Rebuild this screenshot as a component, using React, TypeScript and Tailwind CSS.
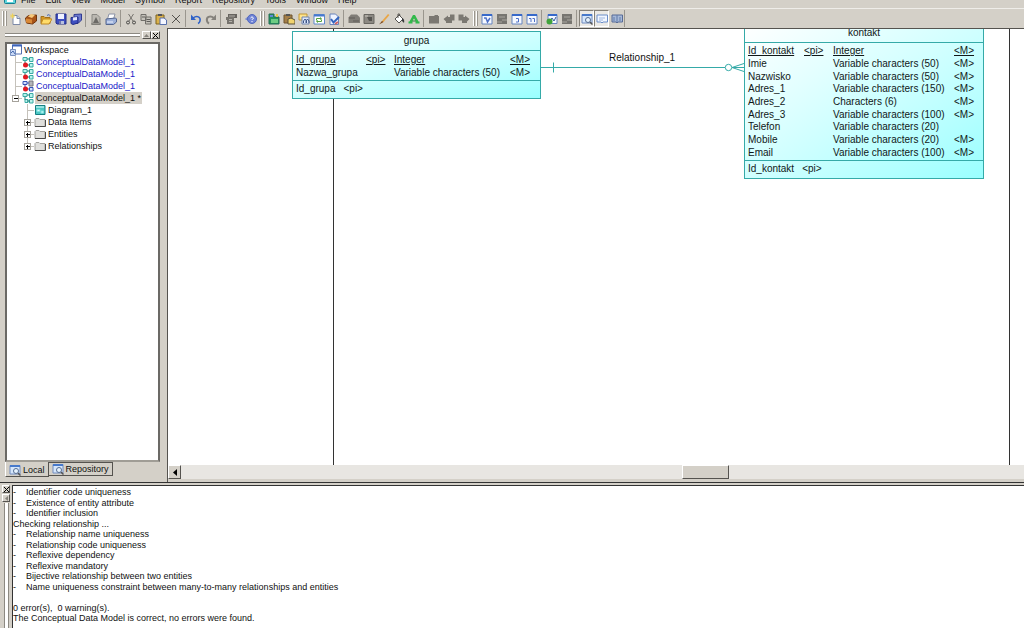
import React, { useState } from "react";

type IconName = keyof typeof icons;

interface Attribute {
  name: string;
  pi?: boolean;
  type: string;
  mandatory?: boolean;
}

interface TreeItem {
  label: string;
  level: number;
  icon: IconName;
  expander?: "plus" | "minus";
  closed?: boolean;
  last?: boolean;
}

const icons = {
  app: (
    <>
      <rect x="3" y="0" width="9" height="5" fill="#c9f4f4" stroke="#1c9aa8" />
      <rect x="0.500" y="4.500" width="11" height="5" rx="1" fill="#5fd5dc" stroke="#137f92" />
      <path d="M3 7h6" stroke="#fff" strokeWidth="2" />
    </>
  ),
  new: (
    <>
      <path d="M3 2.500h4l3 3v6H3z" fill="#fff" stroke="#7d8aa8" />
      <path d="M7 2.500v3h3" fill="#cdd7ee" stroke="#7d8aa8" />
      <path d="M0 3h5M2.500 0.500v5M1 1.500l3 3M4 1.500l-3 3" stroke="#f0d458" />
    </>
  ),
  openModel: (
    <>
      <path d="M0.500 5l3-2.500 8-.5v6l-4 3-6-1z" fill="#a85418" stroke="#70350c" />
      <path d="M1 5.500l6 1v4l-6-1z" fill="#d98937" />
      <path d="M3 3.500l3-2.500 4 1-3 3z" fill="#f7c879" />
    </>
  ),
  open: (
    <>
      <path d="M1 3.500h3l1 1h5v6H1z" fill="#d79a25" stroke="#a2701b" />
      <path d="M3 6h9l-3 5H1z" fill="#ffdc69" stroke="#c08a25" />
      <path d="M7 2.500q3-2 3 1" fill="none" stroke="#3d62b4" />
    </>
  ),
  save: (
    <>
      <path d="M1 1h10v10H2l-1-1z" fill="#3e4fc0" stroke="#252f87" />
      <path d="M3 1h6v5H3z" fill="#eef1ff" />
      <path d="M4 8h5v3H4z" fill="#b9c1de" />
      <path d="M5 8v3" stroke="#252f87" />
    </>
  ),
  saveAll: (
    <>
      <path d="M4 1.500l7.500-.5v6L8 10.500H4z" fill="#6c79cf" stroke="#313b91" />
      <path d="M1 4.500L8 4v6l-5 1.500-2-1z" fill="#3e4fc0" stroke="#252f87" />
      <path d="M3 4.500l4-.5v3l-4 .5z" fill="#e5e9ff" />
    </>
  ),
  preview: (
    <>
      <path d="M2 1.500h5l3 3v7H2z" fill="#bbb8b1" stroke="#8a8883" />
      <path d="M3 10L6 4l3 6z" fill="#6b6965" />
      <path d="M1 11h10" stroke="#77746f" />
    </>
  ),
  print: (
    <>
      <path d="M4 1h6L8.500 6H2.500z" fill="#fff" stroke="#8c93a6" />
      <path d="M1 6l9.500-1 1 1v3l-3 2.500H1z" fill="#9cb0d9" stroke="#53658f" />
      <path d="M2 9h6" stroke="#eef3ff" />
    </>
  ),
  cut: (
    <>
      <path d="M3.500 1L8 8M8.500 1L4 8" stroke="#77746f" />
      <circle cx="3" cy="9.500" r="1.500" fill="none" stroke="#4a4947" />
      <circle cx="9" cy="9.500" r="1.500" fill="none" stroke="#4a4947" />
    </>
  ),
  copy: (
    <>
      <path d="M1 1.500h5v6H1zM5.500 4h5.500v7H5.500z" fill="#c5c2ba" stroke="#706e69" />
      <path d="M2 4h3M6.500 6.500h4M6.500 8.500h4" stroke="#605e5a" />
    </>
  ),
  paste: (
    <>
      <path d="M1 2h8v9H1z" fill="#dbb14a" stroke="#7e641f" />
      <path d="M3 1h4v2H3z" fill="#54545a" />
      <path d="M5 5h4l2.500 2v4.500H5z" fill="#f4f6ff" stroke="#5870ac" />
    </>
  ),
  remove: <path d="M2 2l8 8M10 2l-8 8" stroke="#55534f" />,
  undo: (
    <>
      <path d="M3 5c4-3 8-1 7 3-.3 1.500-1 2-2 2.500" fill="none" stroke="#2f62c8" strokeWidth="1.500" />
      <path d="M1 1.500V7h5z" fill="#2f62c8" />
    </>
  ),
  redo: (
    <>
      <path d="M9 5C5 2 1 4 2 8c.3 1.500 1 2 2 2.500" fill="none" stroke="#85827c" strokeWidth="2" />
      <path d="M11 1.500V7H6z" fill="#85827c" />
    </>
  ),
  props: (
    <>
      <path d="M3 1h9v4H3z" fill="#66635e" />
      <path d="M1 4h8v7H2V7H1z" fill="#77746e" />
      <path d="M4 3h6M4 6.500h3M4 8.500h3" stroke="#b5b2ab" />
    </>
  ),
  help: (
    <>
      <path d="M0.500 6l4-3 6 .5-2 6z" fill="#a9b5ea" stroke="#7786cc" />
      <circle cx="7" cy="6" r="4.500" fill="#6f83d6" stroke="#5268bc" />
      <path d="M5.500 5q1.500-2.500 3 0c0 1-1.500.7-1.500 2M7 8v1.200" fill="none" stroke="#fff" />
    </>
  ),
  model: (
    <>
      <path d="M1 1h5v3h5v7H1z" fill="#24935b" stroke="#256c56" />
      <path d="M3 6h7v4H3z" fill="#6dcc83" />
      <path d="M2 2h3v2H2z" fill="#5e89d9" />
      <path d="M9 1v3" stroke="#e7c847" strokeWidth="2" />
    </>
  ),
  pastePkg: (
    <>
      <path d="M1 2h8v8H1z" fill="#a47e48" stroke="#6f552e" />
      <path d="M3 1h4v2H3z" fill="#555" />
      <path d="M5 6l3-1 4 2v4H5z" fill="#f1d36e" stroke="#5b503a" />
    </>
  ),
  find: (
    <>
      <path d="M1 1h8v6H1z" fill="#ffe48b" stroke="#c19734" />
      <path d="M4 4h7v7H4z" fill="#dbe6fb" stroke="#7386ad" />
      <path d="M5.500 10V8L7 6l1.500 2v2M8 10V8l1.500-2L11 8v2" fill="none" stroke="#3f5687" />
    </>
  ),
  refresh: (
    <>
      <path d="M1 1.500h10.500v9.500H1z" fill="#fff" stroke="#5f87c9" />
      <path d="M1 2.500h10" stroke="#4579d0" strokeWidth="2" />
      <path d="M3.500 7.500V5.500h4M8.500 6.500v2h-4" fill="none" stroke="#56a33f" />
      <path d="M7 4l2 1.500L7 7zM5 7l-2 1.500L5 10z" fill="#56a33f" />
    </>
  ),
  check: (
    <>
      <path d="M2 1h5.500l3 3v7.500H2z" fill="#eef3ff" stroke="#6883bb" />
      <path d="M3 6l2.500 3.500L11 4" fill="none" stroke="#3464bd" strokeWidth="2" />
      <path d="M7 11l3-2" stroke="#d36262" strokeWidth="2" />
    </>
  ),
  grayGroup: (
    <>
      <path d="M3 1.500h6l3 3V10H0.500V4.500z" fill="#807d77" />
      <path d="M1 5h6M5 8h6" stroke="#5f5d59" />
    </>
  ),
  grayImage: (
    <>
      <path d="M1 1.500h10v9H1z" fill="#8c8983" stroke="#686661" />
      <path d="M4 4h5v4H6z" fill="#55534f" />
      <path d="M2 3h3" stroke="#cbc7bf" />
    </>
  ),
  pen: (
    <>
      <path d="M2 11L4 8l6-7 1.500 1-6 7z" fill="#e9a646" />
      <path d="M1 11.500l3-3.500 1.500 1z" fill="#74482a" />
    </>
  ),
  fill: (
    <>
      <path d="M2 6l4-4 4 4-4 4z" fill="#fff" stroke="#55534f" />
      <path d="M5 5V1q2-1 2 2" fill="none" stroke="#55534f" />
      <path d="M9 5q3 1 2 5l-2-2z" fill="#383b3c" />
    </>
  ),
  font: (
    <>
      <path d="M0.500 10.500v-2h1L5 2h2l3.500 6.500h1v2h-4v-2H8L6 5.500 4 8.500h.5v2z" fill="#31b94a" />
      <path d="M4 8h4" stroke="#248b37" />
    </>
  ),
  grayFolder: <path d="M1 3h5l1-1h3v1h1v7.500H1z" fill="#7b7872" />,
  back: <path d="M11.500 1.500v6H9V10H3V8.500L0.500 6 5 2.500V4h2V1.500z" fill="#7b7872" />,
  forward: <path d="M0.500 1.500h5V4H7V2.500L11.500 6 9 8.500V10H4V7.500H0.500z" fill="#7b7872" />,
  diagramA: (
    <>
      <path d="M1 1.500h10v9.500H1z" fill="#f5f8ff" stroke="#6785bf" />
      <path d="M1 2h10" stroke="#3769ca" strokeWidth="2" />
      <path d="M3 5h2l1.500 4L9 5" fill="none" stroke="#4e71c7" strokeWidth="1.500" />
    </>
  ),
  grayDiagram: (
    <>
      <path d="M1 1h10v10H1z" fill="#777570" />
      <path d="M3 4h6M6 7h5M1 9h5" stroke="#aaa79f" />
    </>
  ),
  diagramB: (
    <>
      <path d="M1 1.500h10v9.500H1z" fill="#f5f8ff" stroke="#6785bf" />
      <path d="M1 2h10" stroke="#3769ca" strokeWidth="2" />
      <path d="M5 5.500h2.500V9H5" fill="none" stroke="#4e71c7" />
    </>
  ),
  diagramC: (
    <>
      <path d="M1 1.500h10v9.500H1z" fill="#f5f8ff" stroke="#6785bf" />
      <path d="M1 2h10" stroke="#3769ca" strokeWidth="2" />
      <path d="M3 5.500h2V9M6.500 5.500h2V9" fill="none" stroke="#4e71c7" />
    </>
  ),
  impact: (
    <>
      <path d="M2 1.500h9v9H2z" fill="#f5f8ff" stroke="#6785bf" />
      <path d="M2 2h9" stroke="#3769ca" strokeWidth="2" />
      <path d="M4 8l2-3 2 3 2-4" fill="none" stroke="#355b9a" />
      <circle cx="3.500" cy="8.500" r="3" fill="#41a43c" />
    </>
  ),
  browse: (
    <>
      <path d="M1 1.500h10v8.500H1z" fill="#d5e6fb" stroke="#718cc0" />
      <path d="M1 2h10" stroke="#4779cb" strokeWidth="2" />
      <circle cx="7" cy="7" r="2.500" fill="#e7f4ff" stroke="#566c91" />
      <path d="M9 9l2.500 2.500" stroke="#555" strokeWidth="1.500" />
    </>
  ),
  output: (
    <>
      <path d="M1 2h10.500v7H7l-1 1-1-1H1z" fill="#f3f7ff" stroke="#6b8ec9" />
      <path d="M3 5h6M3 7h4" stroke="#9db6e0" />
    </>
  ),
  results: (
    <>
      <path d="M1 2h10.500v7H7l-1 1-1-1H1z" fill="#a6b8d8" stroke="#576b96" />
      <path d="M6 2v7M3 4v4M9 4v4" stroke="#607aa8" />
    </>
  ),
  workspace: (
    <>
      <path d="M2.500 1h9v9h-9z" fill="#fff" stroke="#536faf" />
      <path d="M2 1.500h10" stroke="#3d65bc" strokeWidth="2" />
      <path d="M0.500 5.500h5v6h-5z" fill="#c8d8f5" stroke="#7890bf" />
      <path d="M1 9l2-2 2 3" fill="none" stroke="#456baf" />
    </>
  ),
  cdm: (
    <>
      <path d="M1 1.500h4v3H1zM7.500 1.500h3.500v4H7.500zM7.500 7.500h3.500v3.500H7.500zM3 7.500h3v3H3z" fill="#b8f2ec" stroke="#3aaba4" />
      <path d="M5 3h3M3 5v3M5 9h3" stroke="#1d7f7a" />
    </>
  ),
  cdmClosed: (
    <>
      <path d="M1 1.500h4v3H1zM7.500 1.500h3.500v4H7.500zM7.500 7.500h3.500v3.500H7.500z" fill="#b8f2ec" stroke="#3aaba4" />
      <path d="M5 3h3M3 5v3M5 9h3" stroke="#1d7f7a" />
      <circle cx="3.500" cy="9" r="2.500" fill="#e01923" />
    </>
  ),
  pdmClosed: (
    <>
      <path d="M1 1.500h4v3H1zM7.500 7.500h3.500v3.500H7.500z" fill="#d3e0ff" stroke="#3654b5" />
      <path d="M7 1h4v5H7z" fill="#b5b5ba" stroke="#77777e" />
      <path d="M5 3h2M3 5v3M5 9h3" stroke="#3654b5" />
      <circle cx="3.500" cy="9" r="2.500" fill="#e01923" />
    </>
  ),
  diagram: (
    <>
      <path d="M1.500 1.500h9.500v9H1.500z" fill="#4cc7c4" stroke="#167f83" />
      <path d="M2 3h8" stroke="#e1ffff" />
      <path d="M3 5.500h3v2H3zM7 7h2.500v2H7z" fill="#d8ffff" stroke="#7fe0de" />
    </>
  ),
  folder: (
    <>
      <path d="M1 3.500l1-1h3l1 1h5v7H1z" fill="#dfdfdc" stroke="#a5a4a0" />
      <path d="M1 10.500h10.500V4" fill="none" stroke="#4b4b4a" />
    </>
  ),
};

const Icon = ({ name }: { name: IconName }) => (
  <svg viewBox="0 0 12 12" className="h-3 w-3 shrink-0" aria-hidden="true">
    {icons[name]}
  </svg>
);

const menus = ["File", "Edit", "View", "Model", "Symbol", "Report", "Repository", "Tools", "Window", "Help"];

// toolbars are separated by a gripper, groups inside a toolbar by a line
const toolbars: IconName[][][] = [
  [
    ["new", "openModel", "open", "save", "saveAll"],
    ["preview", "print"],
    ["cut", "copy", "paste", "remove"],
    ["undo", "redo"],
    ["props"],
    ["help"],
  ],
  [
    ["model", "pastePkg", "find", "refresh", "check"],
    ["grayGroup", "grayImage", "pen", "fill", "font"],
    ["grayFolder", "back", "forward"],
  ],
  [
    ["diagramA", "grayDiagram", "diagramB", "diagramC"],
    ["impact", "grayDiagram"],
    ["browse", "output", "results"],
  ],
];

const tree: TreeItem[] = [
  { label: "Workspace", level: 0, icon: "workspace" },
  { label: "ConceptualDataModel_1", level: 1, icon: "cdmClosed", closed: true },
  { label: "ConceptualDataModel_1", level: 1, icon: "cdmClosed", closed: true },
  { label: "ConceptualDataModel_1", level: 1, icon: "pdmClosed", closed: true },
  { label: "ConceptualDataModel_1 *", level: 1, icon: "cdm", expander: "minus", last: true },
  { label: "Diagram_1", level: 2, icon: "diagram" },
  { label: "Data Items", level: 2, icon: "folder", expander: "plus" },
  { label: "Entities", level: 2, icon: "folder", expander: "plus" },
  { label: "Relationships", level: 2, icon: "folder", expander: "plus", last: true },
];

const grupa: Attribute[] = [
  { name: "Id_grupa", pi: true, type: "Integer", mandatory: true },
  { name: "Nazwa_grupa", type: "Variable characters (50)", mandatory: true },
];

const kontakt: Attribute[] = [
  { name: "Id_kontakt", pi: true, type: "Integer", mandatory: true },
  { name: "Imie", type: "Variable characters (50)", mandatory: true },
  { name: "Nazwisko", type: "Variable characters (50)", mandatory: true },
  { name: "Adres_1", type: "Variable characters (150)", mandatory: true },
  { name: "Adres_2", type: "Characters (6)", mandatory: true },
  { name: "Adres_3", type: "Variable characters (100)", mandatory: true },
  { name: "Telefon", type: "Variable characters (20)" },
  { name: "Mobile", type: "Variable characters (20)", mandatory: true },
  { name: "Email", type: "Variable characters (100)", mandatory: true },
];

const messages = [
  { text: "Identifier code uniqueness", item: true },
  { text: "Existence of entity attribute", item: true },
  { text: "Identifier inclusion", item: true },
  { text: "Checking relationship ..." },
  { text: "Relationship name uniqueness", item: true },
  { text: "Relationship code uniqueness", item: true },
  { text: "Reflexive dependency", item: true },
  { text: "Reflexive mandatory", item: true },
  { text: "Bijective relationship between two entities", item: true },
  { text: "Name uniqueness constraint between many-to-many relationships and entities", item: true },
  { text: "\u00a0" },
  { text: "0 error(s),  0 warning(s)." },
  { text: "The Conceptual Data Model is correct, no errors were found." },
];

const Gripper = () => (
  <span className="flex w-2 shrink-0 justify-center gap-px py-px">
    <span className="w-[2px] border-r border-[#9a968e] bg-white" />
    <span className="w-[2px] border-r border-[#9a968e] bg-white" />
  </span>
);

const Toolbar = ({ groups }: { groups: IconName[][] }) => (
  <div role="toolbar" className="flex">
    {groups.map((group, i) => (
      <div key={i} className="flex">
        {i > 0 && <span className="mx-[2px] w-px bg-[#9a968e]" />}
        {group.map((name, j) => (
          <button
            key={j}
            aria-label={name}
            className={`flex w-[15px] items-center justify-center ${
              name === "browse" || name === "output"
                ? "border border-[#848078] border-r-white border-b-white bg-[#eceae6]"
                : ""
            }`}
          >
            <Icon name={name} />
          </button>
        ))}
      </div>
    ))}
  </div>
);

const Branch = ({ item }: { item: TreeItem }) => (
  <svg viewBox="0 0 12 12" className="h-3 w-3 shrink-0" shapeRendering="crispEdges" aria-hidden="true">
    <path d={item.last ? "M5.500 0v6M6 6.500h6" : "M5.500 0v12M6 6.500h6"} stroke="#c5c2bb" fill="none" />
    {item.expander && (
      <>
        <rect x="2.500" y="3.500" width="6" height="6" fill="#fff" stroke="#a5a29b" />
        <path d={item.expander === "plus" ? "M4 6.500h4M5.500 5v4" : "M4 6.500h4"} stroke="#000" />
      </>
    )}
  </svg>
);

interface EntityProps {
  title: string;
  idName: string;
  attributes: Attribute[];
  className: string;
  tableClass: string;
  cols: string[];
}

const Entity = ({ title, idName, attributes, className, tableClass, cols }: EntityProps) => (
  <section
    className={`absolute border border-[#35aaa8] bg-gradient-to-br from-white to-[#99ffff] text-[10px] leading-3 text-[#101818] ${className}`}
  >
    <h2 className="border-b border-[#35aaa8] py-[3px] text-center">{title}</h2>
    <div className="border-b border-[#35aaa8] pb-px pl-[3px] pt-[2px]">
      <table className={`w-full table-fixed border-collapse whitespace-nowrap ${tableClass}`}>
        <colgroup>
          {cols.map((c, i) => (
            <col key={i} className={c} />
          ))}
        </colgroup>
        <tbody>
          {attributes.map((a) => (
            <tr key={a.name} className={a.pi ? "underline" : ""}>
              <td className="p-0">{a.name}</td>
              <td className="p-0">{a.pi && "<pi>"}</td>
              <td className="p-0">{a.type}</td>
              <td className="p-0">{a.mandatory && "<M>"}</td>
            </tr>
          ))}
        </tbody>
      </table>
    </div>
    <p className="flex gap-2 pb-[3px] pl-[3px] pt-[2px]">
      <span>{idName}</span>
      <span>&lt;pi&gt;</span>
    </p>
  </section>
);

const App: React.FC = () => {
  const [tab, setTab] = useState("Local");

  return (
    <div className="flex h-screen flex-col overflow-hidden bg-[#d4d0c8] font-['Liberation_Sans',Arial,sans-serif] text-[9px] text-[#101010]">
      {/* Menu */}
      <nav className="flex h-2 shrink-0 items-end gap-[5px] overflow-hidden pb-[2px] pl-1 leading-3">
        <Icon name="app" />
        <div className="flex gap-[10px]">
          {menus.map((m) => (
            <button key={m}>{m}</button>
          ))}
        </div>
      </nav>

      {/* Toolbars */}
      <div className="flex h-5 shrink-0 border-t border-[#efede9] py-px">
        {toolbars.map((groups, i) => (
          <div key={i} className="flex">
            <Gripper />
            <Toolbar groups={groups} />
          </div>
        ))}
        <span className="w-px bg-[#9a968e]" />
      </div>

      <div className="flex min-h-0 flex-1">
        {/* Browser */}
        <aside className="flex w-[167px] shrink-0 flex-col pb-[5px] pl-[5px] pr-[7px] pt-[3px]">
          <div className="flex h-2 items-center">
            <span className="mr-[2px] h-1 flex-1 border-y border-[#8c8982] bg-white" />
            <button
              aria-label="Dock"
              className="flex h-2 w-[9px] items-center justify-center border border-white border-b-[#55534f] border-r-[#55534f]"
            >
              <svg viewBox="0 0 5 5" className="h-[5px] w-[5px]">
                <path d="M0 4l2.500-3L5 4z" fill="#85827c" />
              </svg>
            </button>
            <button
              aria-label="Close browser"
              className="flex h-2 w-[9px] items-center justify-center border border-white border-b-[#55534f] border-r-[#55534f]"
            >
              <svg viewBox="0 0 5 5" className="h-[5px] w-[5px]">
                <path d="M0 0l5 5M5 0L0 5" stroke="#000" />
              </svg>
            </button>
          </div>

          <div className="mt-[3px] min-h-0 flex-1 border-2 border-[#6b6965] border-b-[#a09d96] border-r-[#6b6965] bg-white">
            <ul className="flex h-[107px] flex-col justify-between pl-[3px] leading-3">
              {tree.map((item, i) => (
                <li key={i} className="flex h-3 items-center">
                  {item.level === 2 && <span className="w-3" />}
                  {item.level > 0 && <Branch item={item} />}
                  <Icon name={item.icon} />
                  <button
                    className={`ml-px whitespace-pre px-px ${item.closed ? "text-[#2020c8]" : ""} ${
                      item.expander === "minus" ? "bg-[#d4d0c8]" : ""
                    }`}
                  >
                    {item.label}
                  </button>
                </li>
              ))}
            </ul>
          </div>

          <div role="tablist" className="flex items-start">
            {["Local", "Repository"].map((name) => (
              <button
                key={name}
                role="tab"
                aria-selected={tab === name}
                onClick={() => setTab(name)}
                className={`flex items-center gap-[2px] border-b border-r border-[#55534f] px-[3px] leading-3 ${
                  tab === name ? "border-l border-l-white pt-[2px]" : "border-t"
                }`}
              >
                <Icon name="browse" />
                {name}
              </button>
            ))}
          </div>
        </aside>

        {/* Diagram */}
        <main className="flex min-w-0 flex-1 flex-col border-l border-t border-[#55534f] pb-[3px]">
          <div className="relative min-h-0 flex-1 overflow-hidden bg-white">
            <div className="absolute inset-y-0 left-[165px] w-px bg-[#333]" />
            <div className="absolute inset-y-0 left-[841px] w-px bg-[#333]" />
            <svg viewBox="0 0 204 12" className="absolute left-[373px] top-[33px] h-3 w-[204px]">
              <g fill="none" stroke="#35aaa8">
                <path d="M0 5.500h184M12.500 0.500v10M191 5.500h12M191 5.500l12-4M191 5.500l12 4" />
                <circle cx="187.500" cy="5.500" r="3.200" fill="#fff" />
              </g>
            </svg>
            <span className="absolute left-[441px] top-[23px] text-[10px] leading-3">Relationship_1</span>
            <Entity
              title="grupa"
              idName="Id_grupa"
              attributes={grupa}
              className="left-[124px] top-[2px] w-[249px]"
              tableClass="h-[26px]"
              cols={["w-[70px]", "w-[28px]", "w-[116px]", ""]}
            />
            <Entity
              title="kontakt"
              idName="Id_kontakt"
              attributes={kontakt}
              className="-top-[6px] left-[576px] w-[240px]"
              tableClass="h-[114px]"
              cols={["w-[56px]", "w-[29px]", "w-[121px]", ""]}
            />
          </div>
          <div className="flex h-[14px] bg-[#e8e6e2]">
            <button
              aria-label="Scroll left"
              className="flex w-[13px] items-center justify-center border border-white border-b-[#55534f] border-r-[#55534f] bg-[#d4d0c8]"
            >
              <svg viewBox="0 0 4 7" className="h-[7px] w-1">
                <path d="M4 0v7L0 3.500z" fill="#000" />
              </svg>
            </button>
            <span className="flex-[501]" />
            <span className="w-[47px] border border-white border-b-[#55534f] border-r-[#55534f] bg-[#d4d0c8]" />
            <span className="flex-[295]" />
          </div>
        </main>
      </div>

      {/* Output */}
      <footer className="flex h-[146px] shrink-0 border-t border-[#333] pt-[2px]">
        <div className="flex w-3 shrink-0 flex-col items-center gap-px">
          <button
            aria-label="Close output"
            className="flex h-2 w-2 items-center justify-center border border-white border-b-[#55534f] border-r-[#55534f]"
          >
            <svg viewBox="0 0 5 5" className="h-[5px] w-[5px]">
              <path d="M0 0l5 5M5 0L0 5" stroke="#000" />
            </svg>
          </button>
          <button
            aria-label="Collapse output"
            className="flex h-2 w-2 items-center justify-center border border-white border-b-[#55534f] border-r-[#55534f]"
          >
            <svg viewBox="0 0 5 5" className="h-[5px] w-[5px]">
              <path d="M4 0v5L1 2.500z" fill="#85827c" />
            </svg>
          </button>
          <span className="w-[5px] flex-1 border-x border-[#8c8982] bg-white" />
        </div>
        <div className="flex min-w-0 flex-1 flex-col justify-between border-l border-t border-[#333] bg-white pb-[5px] pt-px leading-[10px]">
          {messages.map((m, i) => (
            <p key={i} className="flex h-[10px] whitespace-pre">
              {m.item && <span className="w-[13px]">-</span>}
              {m.text}
            </p>
          ))}
        </div>
      </footer>
    </div>
  );
};

export default App;
